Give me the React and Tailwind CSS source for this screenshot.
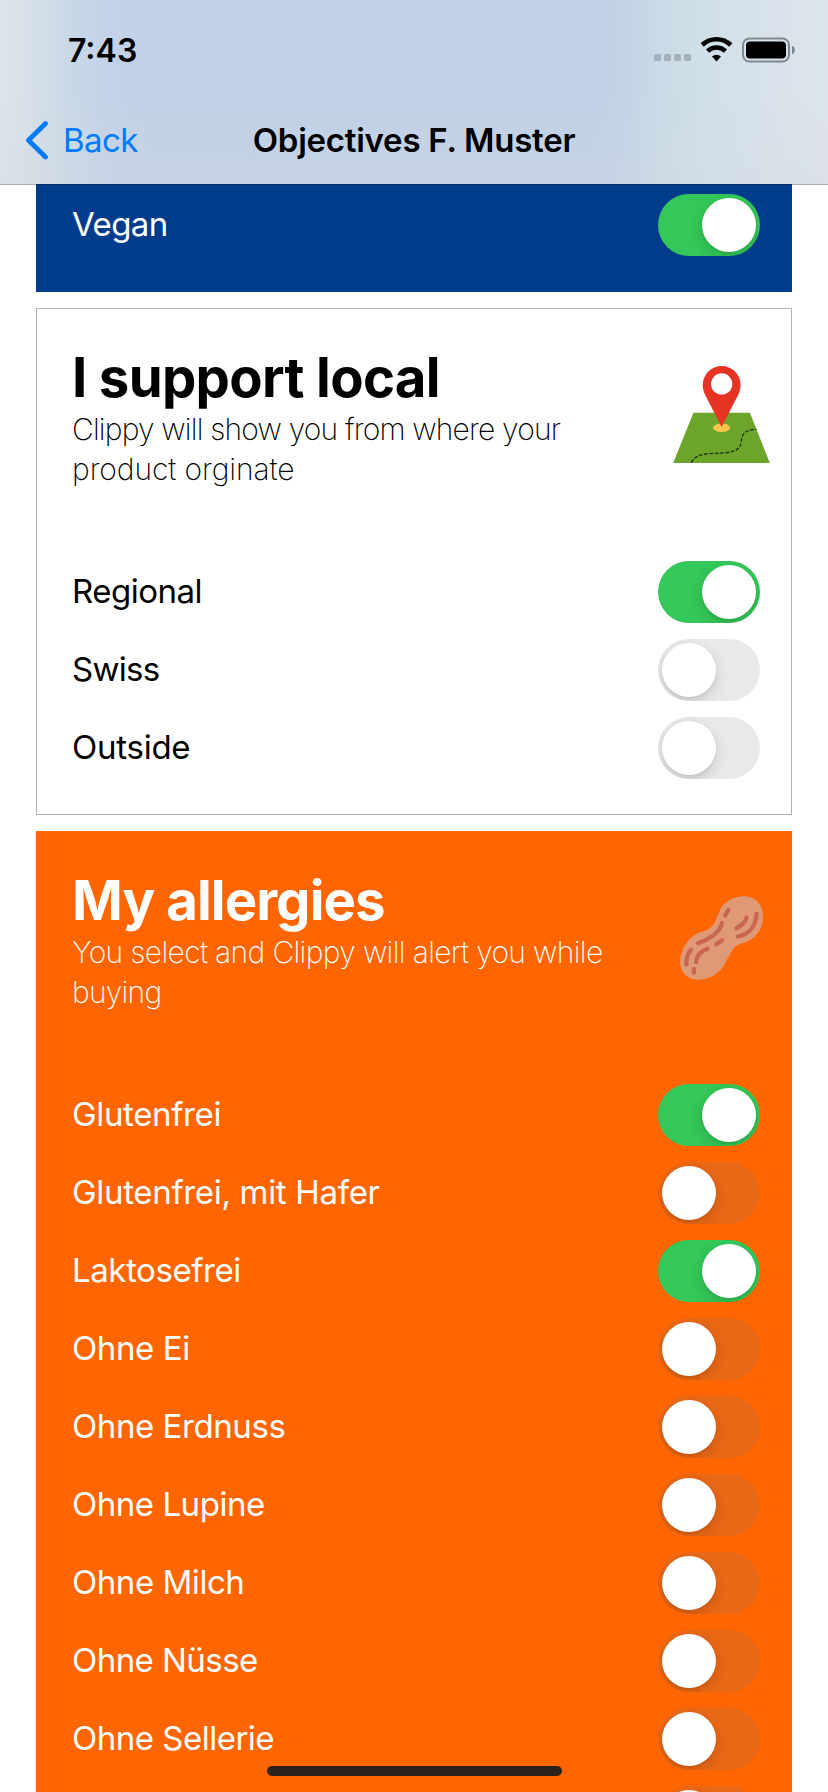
import React from "react";

const allergies = [
  ["Glutenfrei", true, "tracking-[-0.36px]"],
  ["Glutenfrei, mit Hafer", false, "tracking-[-0.32px]"],
  ["Laktosefrei", true, "tracking-[-0.43px]"],
  ["Ohne Ei", false, "tracking-[-0.4px]"],
  ["Ohne Erdnuss", false, "tracking-[-0.43px]"],
  ["Ohne Lupine", false, "tracking-[-0.47px]"],
  ["Ohne Milch", false, "tracking-[-0.45px]"],
  ["Ohne Nüsse", false, "tracking-[-0.55px]"],
  ["Ohne Sellerie", false, "tracking-[-0.5px]"],
  ["", false, ""],
];

function Toggle({ on }) {
  return (
    <div
      className={
        "flex h-[62px] w-[102px] shrink-0 items-center overflow-hidden rounded-full px-1 " +
        (on ? "justify-end bg-[#34c759]" : "justify-start bg-[rgba(120,120,128,0.16)]")
      }
    >
      <div className="size-[54px] rounded-full bg-white shadow-[0_5px_14px_rgba(0,0,0,0.14),0_2px_3px_rgba(0,0,0,0.06)]" />
    </div>
  );
}

function Row({ label, on, tracking }) {
  return (
    <div className="flex h-[78px] shrink-0 items-center justify-between pr-8 pl-9">
      <span className={"pb-[2px] text-[33px] leading-[40px] whitespace-nowrap " + tracking}>{label}</span>
      <Toggle on={on} />
    </div>
  );
}

function CardHead({ title, titleClass, lines, icon }) {
  return (
    <div className="flex h-[209px] shrink-0 items-start justify-between pr-[22px] pl-9">
      <div>
        <h2 className={"h-[65px] text-[54.5px] leading-[66px] font-bold whitespace-nowrap " + titleClass}>{title}</h2>
        {lines.map(([text, cls]) => (
          <p key={text} className={"text-[30px] leading-[40px] font-extralight whitespace-nowrap " + cls}>
            {text}
          </p>
        ))}
      </div>
      <div className="mt-[22px]">{icon}</div>
    </div>
  );
}

function MapIcon() {
  return (
    <svg className="h-[97px] w-[97px]" viewBox="99 77 291 292">
      <path d="M160 218H330L390 369H99Z" fill="#6da52b" />
      <path d="M154 368C163 345 190 341 222 340C262 339 300 338 304 306C304 282 318 267 350 268" fill="none" stroke="#1d3214" strokeWidth="4" strokeDasharray="11 5" />
      <ellipse cx="245" cy="263" rx="26" ry="13" fill="#f9c64d" />
      <path fillRule="evenodd" d="M245 261L197 167C191 156 188 146 188 134A57 57 0 0 1 302 134C302 146 299 156 293 167ZM245 99A32 32 0 1 0 245 163A32 32 0 1 0 245 99Z" fill="#e73323" />
    </svg>
  );
}

function PeanutIcon() {
  return (
    <svg className="h-[97px] w-[97px]" viewBox="99 87 291 292">
      <path d="M313 109C350 109 370 140 370 172C369 213 342 242 305 251C279 256 270 285 253 315C237 345 204 360 170 360C140 358 119 335 120 305C122 264 150 224 188 215C222 207 228 180 240 150C255 122 285 109 313 109Z" fill="#df9a75" />
      <g fill="none" stroke="#c96651" strokeWidth="13" strokeLinecap="round">
        <path d="M265 150L256 167" />
        <path d="M246 189C240 219 207 238 174 250" />
        <path d="M320 173C316 188 302 199 289 205" />
        <path d="M350 162C348 202 325 224 294 230" />
        <path d="M246 241L229 253" />
        <path d="M153 270C142 282 138 298 139 314" />
        <path d="M202 267C182 274 170 288 168 307" />
        <path d="M162 328L161 339" />
      </g>
    </svg>
  );
}

function StatusIcons() {
  return (
    <svg className="mt-[2px] h-[30px] w-[144px]" viewBox="0 0 144 30">
      <g fill="#a4b1bc">
        <rect x="1" y="19" width="7" height="7" rx="1.5" />
        <rect x="11" y="19" width="7" height="7" rx="1.5" />
        <rect x="21" y="19" width="7" height="7" rx="1.5" />
        <rect x="31" y="19" width="7" height="7" rx="1.5" />
      </g>
      <g fill="none" stroke="#000" strokeWidth="4.6">
        <path d="M49.2 10A20.5 20.5 0 0 1 77.8 10" />
        <path d="M54.6 16.2A12.6 12.6 0 0 1 72.4 16.2" />
      </g>
      <path d="M63.5 26.4L59 21.6A6.6 6.6 0 0 1 68 21.6Z" fill="#000" />
      <rect x="90" y="3.5" width="46" height="23" rx="6.5" fill="none" stroke="#818990" strokeWidth="2" />
      <rect x="93" y="6.5" width="40" height="17" rx="3.8" fill="#000" />
      <path d="M139 10.8C142.8 12.2 142.8 17.8 139 19.2Z" fill="#7c858c" />
    </svg>
  );
}

export default function App() {
  return (
    <div className="relative flex h-[1792px] w-[828px] flex-col overflow-hidden bg-white font-['Inter','Noto_Sans',sans-serif] text-black">
      <header className="flex h-[185px] shrink-0 flex-col border-b border-[#a9adb3] bg-[linear-gradient(180deg,transparent_90px,rgba(212,216,224,0.3)_184px),linear-gradient(90deg,#dde4eb_0px,#d5dfe8_36px,#c9d8e6_70px,#c3d2e8_110px,#c0d0e6_160px,#c0d0e6_590px,#c2d3e7_620px,#c8dae6_655px,#d0e0e8_700px,#d8e2ea_770px,#dfe4ec_828px)]">
        <div className="flex h-[97px] items-center justify-between pr-[31px] pl-[68px]">
          <span className="pt-[4px] text-[32px] leading-[40px] font-semibold">7:43</span>
          <StatusIcons />
        </div>
        <div className="grid h-[87px] grid-cols-[1fr_auto_1fr] items-center">
          <div className="flex items-center pb-[1px] pl-[25px] text-[#007aff]">
            <svg className="h-[40px] w-[24px]" viewBox="0 0 24 40">
              <path d="M20.5 3.5L3.5 20.3L20.5 37" fill="none" stroke="currentColor" strokeWidth="4.8" strokeLinecap="round" strokeLinejoin="round" />
            </svg>
            <span className="ml-[14px] text-[33px] leading-[40px] tracking-[-0.6px]">Back</span>
          </div>
          <h1 className="pb-[1px] text-[33px] leading-[40px] font-semibold tracking-[-0.24px]">Objectives F. Muster</h1>
        </div>
      </header>

      <main className="-mt-px flex flex-col px-9">
        <section className="h-[108px] shrink-0 border-t border-[#062c62] bg-[#003c8c] pt-px text-white">
          <Row label="Vegan" on tracking="tracking-[-0.6px]" />
        </section>

        <section className="mt-4 flex h-[507px] shrink-0 flex-col border border-[#b4b4b6] pt-[35px] [&>div]:-mx-px">
          <CardHead
            title="I support local"
            titleClass="tracking-[-0.68px]"
            lines={[
              ["Clippy will show you from where your", "tracking-[-0.82px]"],
              ["product orginate", "tracking-[-0.1px]"],
            ]}
            icon={<MapIcon />}
          />
          <Row label="Regional" on tracking="tracking-[-0.5px]" />
          <Row label="Swiss" on={false} tracking="tracking-[-0.7px]" />
          <Row label="Outside" on={false} tracking="tracking-[-0.25px]" />
        </section>

        <section className="mt-4 flex shrink-0 flex-col bg-[#ff6602] pt-9 text-white">
          <CardHead
            title="My allergies"
            titleClass="tracking-[-0.93px]"
            lines={[
              ["You select and Clippy will alert you while", "tracking-[-0.65px]"],
              ["buying", "tracking-[-0.75px]"],
            ]}
            icon={<PeanutIcon />}
          />
          {allergies.map(([label, on, tracking]) => (
            <Row key={label} label={label} on={on} tracking={tracking} />
          ))}
        </section>
      </main>

      <div className="absolute top-[1766px] left-[267px] h-[10px] w-[295px] rounded-full bg-[#2b221c]" />
    </div>
  );
}
